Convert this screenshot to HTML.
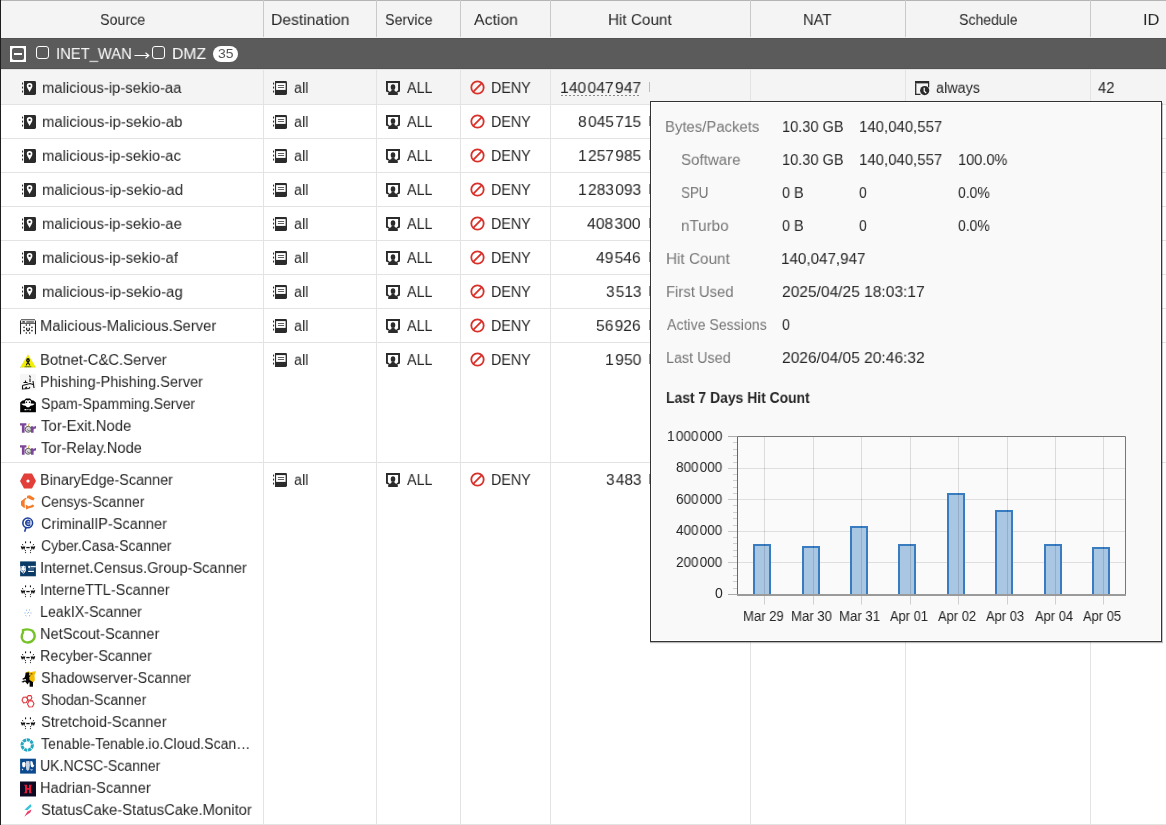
<!DOCTYPE html>
<html><head><meta charset="utf-8"><style>
*{margin:0;padding:0;box-sizing:border-box}
html,body{width:1166px;height:825px;overflow:hidden;background:#fff}
body{position:relative;font-family:"Liberation Sans",sans-serif;color:#262626}
.t{position:absolute;white-space:pre;transform-origin:0 0}
.g{will-change:transform}
.ic{position:absolute;line-height:0}
.ic svg{display:block}
.vl{position:absolute;top:70px;height:755px;width:1px;background:#e3e3e3}
.hl{position:absolute;left:0;width:1166px;height:1px;background:#e3e3e3}
.hvl{position:absolute;top:0;height:37px;width:1px;background:#c9c9c9}
.bar{position:absolute;left:649px;width:1px;height:10px;background:#7896d0}
</style></head><body>
<div style="position:absolute;left:0;top:0;width:1166px;height:38px;background:#f4f4f4"></div>
<div style="position:absolute;left:0;top:0;width:1166px;height:1px;background:#b4b4b4"></div>
<div class="hvl" style="left:263px"></div><div class="hvl" style="left:376px"></div><div class="hvl" style="left:460px"></div><div class="hvl" style="left:550px"></div><div class="hvl" style="left:750px"></div><div class="hvl" style="left:905px"></div><div class="hvl" style="left:1090px"></div>
<div style="position:absolute;left:0;top:38px;width:1166px;height:31px;background:#5b5b5b;border-top:1px solid #525252;border-bottom:1px solid #525252"></div>
<div style="position:absolute;left:0;top:70px;width:1166px;height:34px;background:#f4f4f4"></div>
<div class="vl" style="left:263px"></div><div class="vl" style="left:376px"></div><div class="vl" style="left:460px"></div><div class="vl" style="left:550px"></div><div class="vl" style="left:750px"></div><div class="vl" style="left:905px"></div><div class="vl" style="left:1090px"></div><div class="hl" style="top:69px"></div><div class="hl" style="top:104px"></div><div class="hl" style="top:138px"></div><div class="hl" style="top:172px"></div><div class="hl" style="top:206px"></div><div class="hl" style="top:240px"></div><div class="hl" style="top:274px"></div><div class="hl" style="top:308px"></div><div class="hl" style="top:342px"></div><div class="hl" style="top:462px"></div><div class="hl" style="top:824px"></div>
<div style="position:absolute;left:0;top:0;width:1px;height:825px;background:#1e1e1e"></div>
<div style="position:absolute;left:10px;top:46px;width:16px;height:16px;background:#fff"></div>
<div style="position:absolute;left:12px;top:48px;width:12px;height:12px;background:#5b5b5b;border-radius:2px"></div>
<div style="position:absolute;left:14px;top:53px;width:8px;height:2px;background:#fff"></div>
<div style="position:absolute;left:35.5px;top:46px;width:13.5px;height:13px;border:1.5px solid #fff;border-radius:3px"></div>
<div style="position:absolute;left:151.5px;top:46px;width:13.5px;height:13px;border:1.5px solid #fff;border-radius:3px"></div>
<svg style="position:absolute;left:134px;top:51px" width="16" height="9" viewBox="0 0 16 9"><path d="M0.5 4.5H14.5M11.5 1.8L14.8 4.5L11.5 7.2" fill="none" stroke="#fff" stroke-width="1.1"/></svg>
<div style="position:absolute;left:212.5px;top:46px;width:25.5px;height:16px;background:#fff;border-radius:8px"></div>
<div class="ic" style="left:22px;top:81px"><svg width="14" height="14" viewBox="0 0 14 14"><rect x="0" y="1.6" width="1.1" height="1.9" fill="#2b2b2b"/><rect x="0" y="5.6" width="1.1" height="1.9" fill="#2b2b2b"/><rect x="0" y="9.6" width="1.1" height="1.9" fill="#2b2b2b"/><path d="M2 0H12.6Q14 0 14 1.4V12.6Q14 14 12.6 14H2Z" fill="#2b2b2b"/><path d="M7.6 2.1a2.8 2.8 0 0 1 2.8 2.8c0 1.7-1.7 3.4-2.8 6.1c-1.1-2.7-2.8-4.4-2.8-6.1a2.8 2.8 0 0 1 2.8-2.8z" fill="#fff"/><circle cx="7.6" cy="4.9" r="1.15" fill="#2b2b2b"/></svg></div><div class="ic" style="left:273px;top:81px"><svg width="14" height="14" viewBox="0 0 14 14"><rect x="0" y="1.6" width="1.1" height="1.9" fill="#2b2b2b"/><rect x="0" y="5.6" width="1.1" height="1.9" fill="#2b2b2b"/><rect x="0" y="9.6" width="1.1" height="1.9" fill="#2b2b2b"/><path d="M2 0H12.6Q14 0 14 1.4V12.6Q14 14 12.6 14H2Z" fill="#2b2b2b"/><rect x="3.1" y="2.1" width="9.5" height="6.8" fill="#fff"/><rect x="4.9" y="4.2" width="6.2" height="0.75" fill="#2b2b2b"/><rect x="4.9" y="6.1" width="6.2" height="0.75" fill="#2b2b2b"/></svg></div><div class="ic" style="left:386px;top:81px"><svg width="14" height="14" viewBox="0 0 14 14"><path d="M0.95 10.2V0.95H13.05V10.2" fill="none" stroke="#2b2b2b" stroke-width="1.9"/><path d="M0 9.4Q0 11.4 2.8 11.3L3.6 10.2L1.9 9.4Z" fill="#2b2b2b"/><path d="M14 9.4Q14 11.4 11.2 11.3L10.4 10.2L12.1 9.4Z" fill="#2b2b2b"/><ellipse cx="7" cy="6.1" rx="2.3" ry="2.9" fill="#2b2b2b"/><path d="M5.4 8.4Q7 9.6 8.6 8.4V10L11.8 11.5V13.9H2.2V11.5L5.4 10Z" fill="#2b2b2b"/></svg></div><div class="ic" style="left:469.5px;top:79.5px"><svg width="15" height="15" viewBox="0 0 15 15"><circle cx="7.5" cy="7.5" r="6.2" fill="none" stroke="#d8312a" stroke-width="1.8"/><path d="M11.8 3.2L3.2 11.8" stroke="#d8312a" stroke-width="1.8"/></svg></div><div class="bar" style="top:82px;background:#a3bff2"></div><div class="ic" style="left:22px;top:115px"><svg width="14" height="14" viewBox="0 0 14 14"><rect x="0" y="1.6" width="1.1" height="1.9" fill="#2b2b2b"/><rect x="0" y="5.6" width="1.1" height="1.9" fill="#2b2b2b"/><rect x="0" y="9.6" width="1.1" height="1.9" fill="#2b2b2b"/><path d="M2 0H12.6Q14 0 14 1.4V12.6Q14 14 12.6 14H2Z" fill="#2b2b2b"/><path d="M7.6 2.1a2.8 2.8 0 0 1 2.8 2.8c0 1.7-1.7 3.4-2.8 6.1c-1.1-2.7-2.8-4.4-2.8-6.1a2.8 2.8 0 0 1 2.8-2.8z" fill="#fff"/><circle cx="7.6" cy="4.9" r="1.15" fill="#2b2b2b"/></svg></div><div class="ic" style="left:273px;top:115px"><svg width="14" height="14" viewBox="0 0 14 14"><rect x="0" y="1.6" width="1.1" height="1.9" fill="#2b2b2b"/><rect x="0" y="5.6" width="1.1" height="1.9" fill="#2b2b2b"/><rect x="0" y="9.6" width="1.1" height="1.9" fill="#2b2b2b"/><path d="M2 0H12.6Q14 0 14 1.4V12.6Q14 14 12.6 14H2Z" fill="#2b2b2b"/><rect x="3.1" y="2.1" width="9.5" height="6.8" fill="#fff"/><rect x="4.9" y="4.2" width="6.2" height="0.75" fill="#2b2b2b"/><rect x="4.9" y="6.1" width="6.2" height="0.75" fill="#2b2b2b"/></svg></div><div class="ic" style="left:386px;top:115px"><svg width="14" height="14" viewBox="0 0 14 14"><path d="M0.95 10.2V0.95H13.05V10.2" fill="none" stroke="#2b2b2b" stroke-width="1.9"/><path d="M0 9.4Q0 11.4 2.8 11.3L3.6 10.2L1.9 9.4Z" fill="#2b2b2b"/><path d="M14 9.4Q14 11.4 11.2 11.3L10.4 10.2L12.1 9.4Z" fill="#2b2b2b"/><ellipse cx="7" cy="6.1" rx="2.3" ry="2.9" fill="#2b2b2b"/><path d="M5.4 8.4Q7 9.6 8.6 8.4V10L11.8 11.5V13.9H2.2V11.5L5.4 10Z" fill="#2b2b2b"/></svg></div><div class="ic" style="left:469.5px;top:113.5px"><svg width="15" height="15" viewBox="0 0 15 15"><circle cx="7.5" cy="7.5" r="6.2" fill="none" stroke="#d8312a" stroke-width="1.8"/><path d="M11.8 3.2L3.2 11.8" stroke="#d8312a" stroke-width="1.8"/></svg></div><div class="bar" style="top:116px"></div><div class="ic" style="left:22px;top:149px"><svg width="14" height="14" viewBox="0 0 14 14"><rect x="0" y="1.6" width="1.1" height="1.9" fill="#2b2b2b"/><rect x="0" y="5.6" width="1.1" height="1.9" fill="#2b2b2b"/><rect x="0" y="9.6" width="1.1" height="1.9" fill="#2b2b2b"/><path d="M2 0H12.6Q14 0 14 1.4V12.6Q14 14 12.6 14H2Z" fill="#2b2b2b"/><path d="M7.6 2.1a2.8 2.8 0 0 1 2.8 2.8c0 1.7-1.7 3.4-2.8 6.1c-1.1-2.7-2.8-4.4-2.8-6.1a2.8 2.8 0 0 1 2.8-2.8z" fill="#fff"/><circle cx="7.6" cy="4.9" r="1.15" fill="#2b2b2b"/></svg></div><div class="ic" style="left:273px;top:149px"><svg width="14" height="14" viewBox="0 0 14 14"><rect x="0" y="1.6" width="1.1" height="1.9" fill="#2b2b2b"/><rect x="0" y="5.6" width="1.1" height="1.9" fill="#2b2b2b"/><rect x="0" y="9.6" width="1.1" height="1.9" fill="#2b2b2b"/><path d="M2 0H12.6Q14 0 14 1.4V12.6Q14 14 12.6 14H2Z" fill="#2b2b2b"/><rect x="3.1" y="2.1" width="9.5" height="6.8" fill="#fff"/><rect x="4.9" y="4.2" width="6.2" height="0.75" fill="#2b2b2b"/><rect x="4.9" y="6.1" width="6.2" height="0.75" fill="#2b2b2b"/></svg></div><div class="ic" style="left:386px;top:149px"><svg width="14" height="14" viewBox="0 0 14 14"><path d="M0.95 10.2V0.95H13.05V10.2" fill="none" stroke="#2b2b2b" stroke-width="1.9"/><path d="M0 9.4Q0 11.4 2.8 11.3L3.6 10.2L1.9 9.4Z" fill="#2b2b2b"/><path d="M14 9.4Q14 11.4 11.2 11.3L10.4 10.2L12.1 9.4Z" fill="#2b2b2b"/><ellipse cx="7" cy="6.1" rx="2.3" ry="2.9" fill="#2b2b2b"/><path d="M5.4 8.4Q7 9.6 8.6 8.4V10L11.8 11.5V13.9H2.2V11.5L5.4 10Z" fill="#2b2b2b"/></svg></div><div class="ic" style="left:469.5px;top:147.5px"><svg width="15" height="15" viewBox="0 0 15 15"><circle cx="7.5" cy="7.5" r="6.2" fill="none" stroke="#d8312a" stroke-width="1.8"/><path d="M11.8 3.2L3.2 11.8" stroke="#d8312a" stroke-width="1.8"/></svg></div><div class="bar" style="top:150px"></div><div class="ic" style="left:22px;top:183px"><svg width="14" height="14" viewBox="0 0 14 14"><rect x="0" y="1.6" width="1.1" height="1.9" fill="#2b2b2b"/><rect x="0" y="5.6" width="1.1" height="1.9" fill="#2b2b2b"/><rect x="0" y="9.6" width="1.1" height="1.9" fill="#2b2b2b"/><path d="M2 0H12.6Q14 0 14 1.4V12.6Q14 14 12.6 14H2Z" fill="#2b2b2b"/><path d="M7.6 2.1a2.8 2.8 0 0 1 2.8 2.8c0 1.7-1.7 3.4-2.8 6.1c-1.1-2.7-2.8-4.4-2.8-6.1a2.8 2.8 0 0 1 2.8-2.8z" fill="#fff"/><circle cx="7.6" cy="4.9" r="1.15" fill="#2b2b2b"/></svg></div><div class="ic" style="left:273px;top:183px"><svg width="14" height="14" viewBox="0 0 14 14"><rect x="0" y="1.6" width="1.1" height="1.9" fill="#2b2b2b"/><rect x="0" y="5.6" width="1.1" height="1.9" fill="#2b2b2b"/><rect x="0" y="9.6" width="1.1" height="1.9" fill="#2b2b2b"/><path d="M2 0H12.6Q14 0 14 1.4V12.6Q14 14 12.6 14H2Z" fill="#2b2b2b"/><rect x="3.1" y="2.1" width="9.5" height="6.8" fill="#fff"/><rect x="4.9" y="4.2" width="6.2" height="0.75" fill="#2b2b2b"/><rect x="4.9" y="6.1" width="6.2" height="0.75" fill="#2b2b2b"/></svg></div><div class="ic" style="left:386px;top:183px"><svg width="14" height="14" viewBox="0 0 14 14"><path d="M0.95 10.2V0.95H13.05V10.2" fill="none" stroke="#2b2b2b" stroke-width="1.9"/><path d="M0 9.4Q0 11.4 2.8 11.3L3.6 10.2L1.9 9.4Z" fill="#2b2b2b"/><path d="M14 9.4Q14 11.4 11.2 11.3L10.4 10.2L12.1 9.4Z" fill="#2b2b2b"/><ellipse cx="7" cy="6.1" rx="2.3" ry="2.9" fill="#2b2b2b"/><path d="M5.4 8.4Q7 9.6 8.6 8.4V10L11.8 11.5V13.9H2.2V11.5L5.4 10Z" fill="#2b2b2b"/></svg></div><div class="ic" style="left:469.5px;top:181.5px"><svg width="15" height="15" viewBox="0 0 15 15"><circle cx="7.5" cy="7.5" r="6.2" fill="none" stroke="#d8312a" stroke-width="1.8"/><path d="M11.8 3.2L3.2 11.8" stroke="#d8312a" stroke-width="1.8"/></svg></div><div class="bar" style="top:184px"></div><div class="ic" style="left:22px;top:217px"><svg width="14" height="14" viewBox="0 0 14 14"><rect x="0" y="1.6" width="1.1" height="1.9" fill="#2b2b2b"/><rect x="0" y="5.6" width="1.1" height="1.9" fill="#2b2b2b"/><rect x="0" y="9.6" width="1.1" height="1.9" fill="#2b2b2b"/><path d="M2 0H12.6Q14 0 14 1.4V12.6Q14 14 12.6 14H2Z" fill="#2b2b2b"/><path d="M7.6 2.1a2.8 2.8 0 0 1 2.8 2.8c0 1.7-1.7 3.4-2.8 6.1c-1.1-2.7-2.8-4.4-2.8-6.1a2.8 2.8 0 0 1 2.8-2.8z" fill="#fff"/><circle cx="7.6" cy="4.9" r="1.15" fill="#2b2b2b"/></svg></div><div class="ic" style="left:273px;top:217px"><svg width="14" height="14" viewBox="0 0 14 14"><rect x="0" y="1.6" width="1.1" height="1.9" fill="#2b2b2b"/><rect x="0" y="5.6" width="1.1" height="1.9" fill="#2b2b2b"/><rect x="0" y="9.6" width="1.1" height="1.9" fill="#2b2b2b"/><path d="M2 0H12.6Q14 0 14 1.4V12.6Q14 14 12.6 14H2Z" fill="#2b2b2b"/><rect x="3.1" y="2.1" width="9.5" height="6.8" fill="#fff"/><rect x="4.9" y="4.2" width="6.2" height="0.75" fill="#2b2b2b"/><rect x="4.9" y="6.1" width="6.2" height="0.75" fill="#2b2b2b"/></svg></div><div class="ic" style="left:386px;top:217px"><svg width="14" height="14" viewBox="0 0 14 14"><path d="M0.95 10.2V0.95H13.05V10.2" fill="none" stroke="#2b2b2b" stroke-width="1.9"/><path d="M0 9.4Q0 11.4 2.8 11.3L3.6 10.2L1.9 9.4Z" fill="#2b2b2b"/><path d="M14 9.4Q14 11.4 11.2 11.3L10.4 10.2L12.1 9.4Z" fill="#2b2b2b"/><ellipse cx="7" cy="6.1" rx="2.3" ry="2.9" fill="#2b2b2b"/><path d="M5.4 8.4Q7 9.6 8.6 8.4V10L11.8 11.5V13.9H2.2V11.5L5.4 10Z" fill="#2b2b2b"/></svg></div><div class="ic" style="left:469.5px;top:215.5px"><svg width="15" height="15" viewBox="0 0 15 15"><circle cx="7.5" cy="7.5" r="6.2" fill="none" stroke="#d8312a" stroke-width="1.8"/><path d="M11.8 3.2L3.2 11.8" stroke="#d8312a" stroke-width="1.8"/></svg></div><div class="bar" style="top:218px"></div><div class="ic" style="left:22px;top:251px"><svg width="14" height="14" viewBox="0 0 14 14"><rect x="0" y="1.6" width="1.1" height="1.9" fill="#2b2b2b"/><rect x="0" y="5.6" width="1.1" height="1.9" fill="#2b2b2b"/><rect x="0" y="9.6" width="1.1" height="1.9" fill="#2b2b2b"/><path d="M2 0H12.6Q14 0 14 1.4V12.6Q14 14 12.6 14H2Z" fill="#2b2b2b"/><path d="M7.6 2.1a2.8 2.8 0 0 1 2.8 2.8c0 1.7-1.7 3.4-2.8 6.1c-1.1-2.7-2.8-4.4-2.8-6.1a2.8 2.8 0 0 1 2.8-2.8z" fill="#fff"/><circle cx="7.6" cy="4.9" r="1.15" fill="#2b2b2b"/></svg></div><div class="ic" style="left:273px;top:251px"><svg width="14" height="14" viewBox="0 0 14 14"><rect x="0" y="1.6" width="1.1" height="1.9" fill="#2b2b2b"/><rect x="0" y="5.6" width="1.1" height="1.9" fill="#2b2b2b"/><rect x="0" y="9.6" width="1.1" height="1.9" fill="#2b2b2b"/><path d="M2 0H12.6Q14 0 14 1.4V12.6Q14 14 12.6 14H2Z" fill="#2b2b2b"/><rect x="3.1" y="2.1" width="9.5" height="6.8" fill="#fff"/><rect x="4.9" y="4.2" width="6.2" height="0.75" fill="#2b2b2b"/><rect x="4.9" y="6.1" width="6.2" height="0.75" fill="#2b2b2b"/></svg></div><div class="ic" style="left:386px;top:251px"><svg width="14" height="14" viewBox="0 0 14 14"><path d="M0.95 10.2V0.95H13.05V10.2" fill="none" stroke="#2b2b2b" stroke-width="1.9"/><path d="M0 9.4Q0 11.4 2.8 11.3L3.6 10.2L1.9 9.4Z" fill="#2b2b2b"/><path d="M14 9.4Q14 11.4 11.2 11.3L10.4 10.2L12.1 9.4Z" fill="#2b2b2b"/><ellipse cx="7" cy="6.1" rx="2.3" ry="2.9" fill="#2b2b2b"/><path d="M5.4 8.4Q7 9.6 8.6 8.4V10L11.8 11.5V13.9H2.2V11.5L5.4 10Z" fill="#2b2b2b"/></svg></div><div class="ic" style="left:469.5px;top:249.5px"><svg width="15" height="15" viewBox="0 0 15 15"><circle cx="7.5" cy="7.5" r="6.2" fill="none" stroke="#d8312a" stroke-width="1.8"/><path d="M11.8 3.2L3.2 11.8" stroke="#d8312a" stroke-width="1.8"/></svg></div><div class="bar" style="top:252px"></div><div class="ic" style="left:22px;top:285px"><svg width="14" height="14" viewBox="0 0 14 14"><rect x="0" y="1.6" width="1.1" height="1.9" fill="#2b2b2b"/><rect x="0" y="5.6" width="1.1" height="1.9" fill="#2b2b2b"/><rect x="0" y="9.6" width="1.1" height="1.9" fill="#2b2b2b"/><path d="M2 0H12.6Q14 0 14 1.4V12.6Q14 14 12.6 14H2Z" fill="#2b2b2b"/><path d="M7.6 2.1a2.8 2.8 0 0 1 2.8 2.8c0 1.7-1.7 3.4-2.8 6.1c-1.1-2.7-2.8-4.4-2.8-6.1a2.8 2.8 0 0 1 2.8-2.8z" fill="#fff"/><circle cx="7.6" cy="4.9" r="1.15" fill="#2b2b2b"/></svg></div><div class="ic" style="left:273px;top:285px"><svg width="14" height="14" viewBox="0 0 14 14"><rect x="0" y="1.6" width="1.1" height="1.9" fill="#2b2b2b"/><rect x="0" y="5.6" width="1.1" height="1.9" fill="#2b2b2b"/><rect x="0" y="9.6" width="1.1" height="1.9" fill="#2b2b2b"/><path d="M2 0H12.6Q14 0 14 1.4V12.6Q14 14 12.6 14H2Z" fill="#2b2b2b"/><rect x="3.1" y="2.1" width="9.5" height="6.8" fill="#fff"/><rect x="4.9" y="4.2" width="6.2" height="0.75" fill="#2b2b2b"/><rect x="4.9" y="6.1" width="6.2" height="0.75" fill="#2b2b2b"/></svg></div><div class="ic" style="left:386px;top:285px"><svg width="14" height="14" viewBox="0 0 14 14"><path d="M0.95 10.2V0.95H13.05V10.2" fill="none" stroke="#2b2b2b" stroke-width="1.9"/><path d="M0 9.4Q0 11.4 2.8 11.3L3.6 10.2L1.9 9.4Z" fill="#2b2b2b"/><path d="M14 9.4Q14 11.4 11.2 11.3L10.4 10.2L12.1 9.4Z" fill="#2b2b2b"/><ellipse cx="7" cy="6.1" rx="2.3" ry="2.9" fill="#2b2b2b"/><path d="M5.4 8.4Q7 9.6 8.6 8.4V10L11.8 11.5V13.9H2.2V11.5L5.4 10Z" fill="#2b2b2b"/></svg></div><div class="ic" style="left:469.5px;top:283.5px"><svg width="15" height="15" viewBox="0 0 15 15"><circle cx="7.5" cy="7.5" r="6.2" fill="none" stroke="#d8312a" stroke-width="1.8"/><path d="M11.8 3.2L3.2 11.8" stroke="#d8312a" stroke-width="1.8"/></svg></div><div class="bar" style="top:286px"></div><div class="ic" style="left:273px;top:319px"><svg width="14" height="14" viewBox="0 0 14 14"><rect x="0" y="1.6" width="1.1" height="1.9" fill="#2b2b2b"/><rect x="0" y="5.6" width="1.1" height="1.9" fill="#2b2b2b"/><rect x="0" y="9.6" width="1.1" height="1.9" fill="#2b2b2b"/><path d="M2 0H12.6Q14 0 14 1.4V12.6Q14 14 12.6 14H2Z" fill="#2b2b2b"/><rect x="3.1" y="2.1" width="9.5" height="6.8" fill="#fff"/><rect x="4.9" y="4.2" width="6.2" height="0.75" fill="#2b2b2b"/><rect x="4.9" y="6.1" width="6.2" height="0.75" fill="#2b2b2b"/></svg></div><div class="ic" style="left:386px;top:319px"><svg width="14" height="14" viewBox="0 0 14 14"><path d="M0.95 10.2V0.95H13.05V10.2" fill="none" stroke="#2b2b2b" stroke-width="1.9"/><path d="M0 9.4Q0 11.4 2.8 11.3L3.6 10.2L1.9 9.4Z" fill="#2b2b2b"/><path d="M14 9.4Q14 11.4 11.2 11.3L10.4 10.2L12.1 9.4Z" fill="#2b2b2b"/><ellipse cx="7" cy="6.1" rx="2.3" ry="2.9" fill="#2b2b2b"/><path d="M5.4 8.4Q7 9.6 8.6 8.4V10L11.8 11.5V13.9H2.2V11.5L5.4 10Z" fill="#2b2b2b"/></svg></div><div class="ic" style="left:469.5px;top:317.5px"><svg width="15" height="15" viewBox="0 0 15 15"><circle cx="7.5" cy="7.5" r="6.2" fill="none" stroke="#d8312a" stroke-width="1.8"/><path d="M11.8 3.2L3.2 11.8" stroke="#d8312a" stroke-width="1.8"/></svg></div><div class="bar" style="top:320px"></div><div class="ic" style="left:273px;top:353px"><svg width="14" height="14" viewBox="0 0 14 14"><rect x="0" y="1.6" width="1.1" height="1.9" fill="#2b2b2b"/><rect x="0" y="5.6" width="1.1" height="1.9" fill="#2b2b2b"/><rect x="0" y="9.6" width="1.1" height="1.9" fill="#2b2b2b"/><path d="M2 0H12.6Q14 0 14 1.4V12.6Q14 14 12.6 14H2Z" fill="#2b2b2b"/><rect x="3.1" y="2.1" width="9.5" height="6.8" fill="#fff"/><rect x="4.9" y="4.2" width="6.2" height="0.75" fill="#2b2b2b"/><rect x="4.9" y="6.1" width="6.2" height="0.75" fill="#2b2b2b"/></svg></div><div class="ic" style="left:386px;top:353px"><svg width="14" height="14" viewBox="0 0 14 14"><path d="M0.95 10.2V0.95H13.05V10.2" fill="none" stroke="#2b2b2b" stroke-width="1.9"/><path d="M0 9.4Q0 11.4 2.8 11.3L3.6 10.2L1.9 9.4Z" fill="#2b2b2b"/><path d="M14 9.4Q14 11.4 11.2 11.3L10.4 10.2L12.1 9.4Z" fill="#2b2b2b"/><ellipse cx="7" cy="6.1" rx="2.3" ry="2.9" fill="#2b2b2b"/><path d="M5.4 8.4Q7 9.6 8.6 8.4V10L11.8 11.5V13.9H2.2V11.5L5.4 10Z" fill="#2b2b2b"/></svg></div><div class="ic" style="left:469.5px;top:351.5px"><svg width="15" height="15" viewBox="0 0 15 15"><circle cx="7.5" cy="7.5" r="6.2" fill="none" stroke="#d8312a" stroke-width="1.8"/><path d="M11.8 3.2L3.2 11.8" stroke="#d8312a" stroke-width="1.8"/></svg></div><div class="bar" style="top:354px"></div><div class="ic" style="left:273px;top:473px"><svg width="14" height="14" viewBox="0 0 14 14"><rect x="0" y="1.6" width="1.1" height="1.9" fill="#2b2b2b"/><rect x="0" y="5.6" width="1.1" height="1.9" fill="#2b2b2b"/><rect x="0" y="9.6" width="1.1" height="1.9" fill="#2b2b2b"/><path d="M2 0H12.6Q14 0 14 1.4V12.6Q14 14 12.6 14H2Z" fill="#2b2b2b"/><rect x="3.1" y="2.1" width="9.5" height="6.8" fill="#fff"/><rect x="4.9" y="4.2" width="6.2" height="0.75" fill="#2b2b2b"/><rect x="4.9" y="6.1" width="6.2" height="0.75" fill="#2b2b2b"/></svg></div><div class="ic" style="left:386px;top:473px"><svg width="14" height="14" viewBox="0 0 14 14"><path d="M0.95 10.2V0.95H13.05V10.2" fill="none" stroke="#2b2b2b" stroke-width="1.9"/><path d="M0 9.4Q0 11.4 2.8 11.3L3.6 10.2L1.9 9.4Z" fill="#2b2b2b"/><path d="M14 9.4Q14 11.4 11.2 11.3L10.4 10.2L12.1 9.4Z" fill="#2b2b2b"/><ellipse cx="7" cy="6.1" rx="2.3" ry="2.9" fill="#2b2b2b"/><path d="M5.4 8.4Q7 9.6 8.6 8.4V10L11.8 11.5V13.9H2.2V11.5L5.4 10Z" fill="#2b2b2b"/></svg></div><div class="ic" style="left:469.5px;top:471.5px"><svg width="15" height="15" viewBox="0 0 15 15"><circle cx="7.5" cy="7.5" r="6.2" fill="none" stroke="#d8312a" stroke-width="1.8"/><path d="M11.8 3.2L3.2 11.8" stroke="#d8312a" stroke-width="1.8"/></svg></div><div class="bar" style="top:474px"></div><div class="ic" style="left:914.5px;top:80.5px"><svg width="15" height="15" viewBox="0 0 15 15"><path d="M0.7 2.2V13.3H5.5" fill="none" stroke="#2b2b2b" stroke-width="1.3"/><rect x="0" y="0" width="14.2" height="2.4" fill="#2b2b2b"/><path d="M13.6 2V6.2" stroke="#2b2b2b" stroke-width="1.2"/><circle cx="9.7" cy="9.6" r="4.6" fill="#2b2b2b"/><path d="M9.2 6.8V10.2L11.2 12" fill="none" stroke="#fff" stroke-width="1.2"/></svg></div><div class="ic" style="left:20px;top:318.5px"><svg width="16" height="16" viewBox="0 0 16 16"><path d="M0.5 1.6V15.3M15.5 1.6V15.3" stroke="#222" stroke-width="1.1"/><path d="M1 0.75H15" stroke="#222" stroke-width="0.9"/><path d="M0.5 4.3H15.5" stroke="#222" stroke-width="0.9"/><rect x="2.2" y="2.3" width="2.8" height="1.3" rx="0.6" fill="#111"/><rect x="6.3" y="2.4" width="7.6" height="1.1" fill="#333"/><circle cx="9.65" cy="6.03" r="0.8" fill="#111"/><circle cx="11.97" cy="8.35" r="0.8" fill="#111"/><circle cx="11.97" cy="11.65" r="0.8" fill="#111"/><circle cx="9.65" cy="13.97" r="0.8" fill="#111"/><circle cx="6.35" cy="13.97" r="0.8" fill="#111"/><circle cx="4.03" cy="11.65" r="0.8" fill="#111"/><circle cx="4.03" cy="8.35" r="0.8" fill="#111"/><circle cx="6.35" cy="6.03" r="0.8" fill="#111"/><path d="M6.7 8.7V10.8Q8 12.9 9.3 10.8V8.7" fill="none" stroke="#111" stroke-width="1.2"/></svg></div><div class="ic" style="left:20px;top:353px"><svg width="16" height="16" viewBox="0 0 16 16"><path d="M8 1.6L15.9 14.5H0.1Z" fill="#f2f000"/><path d="M8 1.6L15.9 14.5H0.1Z" fill="none" stroke="#9aa0b0" stroke-width="0.35" stroke-dasharray="0.6 1.4"/><ellipse cx="8" cy="7.3" rx="1.8" ry="2.2" fill="#111"/><circle cx="8" cy="7.2" r="0.55" fill="#dd0"/><path d="M7.2 9.2L8.8 9.2L10.3 12.3L9.4 12.6L8 10.6L6.6 12.6L5.7 12.3Z" fill="#111"/><path d="M4.6 13.7H11.4" stroke="#2a4a20" stroke-width="0.7"/></svg></div><div class="ic" style="left:20px;top:374px"><svg width="16" height="16" viewBox="0 0 16 16"><rect x="0" y="0" width="16" height="16" fill="#f6f6f6"/><path d="M9.5 1.5L10.5 3.5M10 4.5V8M3.5 8.5H7.5M5.5 6.5V9M2.5 11.5L10 9.5L13 10.5M2.5 11.5V15L9 14.5L10 13M7 13L5 14.5M13 7L14 14" fill="none" stroke="#111" stroke-width="1.1"/></svg></div><div class="ic" style="left:20px;top:396.5px"><svg width="16" height="16" viewBox="0 0 16 16"><path d="M0.2 5.5L2.5 3.6L4.2 3.2L6 1.4H10L11.8 3.2L13.5 3.6L15.9 5.5V15.3H0.2Z" fill="#000"/><path d="M5 4.5Q5.2 3 6.5 3Q7.5 3.6 8 3.4Q8.5 3.6 9.5 3Q10.8 3 11 4.5L10.7 6.6L14.7 6.8L13 8.3L10.5 8.7L9 10.3H7L5.5 8.7L3 8.3L1.2 6.8L5.3 6.6Z" fill="#fff"/><circle cx="6.5" cy="5.2" r="0.75" fill="#000"/><circle cx="9.5" cy="5.2" r="0.75" fill="#000"/><rect x="4.5" y="12" width="2" height="1.3" fill="#ddd"/><rect x="7.3" y="12.1" width="1.2" height="1" fill="#ccc"/><rect x="9.5" y="12" width="1.3" height="1.4" fill="#ddd"/></svg></div><div class="ic" style="left:20px;top:422.8px"><svg width="16" height="10" viewBox="0 0 16 10"><path d="M0 0.3H6.4V2.6H4.6V9.7H1.9V2.6H0Z" fill="#7d4698"/><path d="M11 3.2H13.4V4.6Q14 3 16 3V5.4Q14 5.4 13.6 6.5V9.7H11Z" fill="#7d4698"/><circle cx="8.2" cy="6.3" r="3" fill="#d8d8d8" stroke="#444" stroke-width="0.8"/><path d="M8.2 3.3L9.3 0.2" stroke="#c8a010" stroke-width="0.8"/><path d="M7.2 6.5Q8 8 9.6 7.4" fill="none" stroke="#333" stroke-width="0.7"/></svg></div><div class="ic" style="left:20px;top:444.8px"><svg width="16" height="10" viewBox="0 0 16 10"><path d="M0 0.3H6.4V2.6H4.6V9.7H1.9V2.6H0Z" fill="#7d4698"/><path d="M11 3.2H13.4V4.6Q14 3 16 3V5.4Q14 5.4 13.6 6.5V9.7H11Z" fill="#7d4698"/><circle cx="8.2" cy="6.3" r="3" fill="#d8d8d8" stroke="#444" stroke-width="0.8"/><path d="M8.2 3.3L9.3 0.2" stroke="#c8a010" stroke-width="0.8"/><path d="M7.2 6.5Q8 8 9.6 7.4" fill="none" stroke="#333" stroke-width="0.7"/></svg></div><div class="ic" style="left:20px;top:472.8px"><svg width="16" height="16" viewBox="0 0 16 16"><path d="M4 0.6H12L16 8L12 15.4H4L0 8Z" fill="#e23f3a"/><circle cx="8" cy="8" r="1.6" fill="#fff"/></svg></div><div class="ic" style="left:20px;top:494.5px"><svg width="16" height="16" viewBox="0 0 16 16"><path d="M7.2 0.8L9.8 0.3L14.6 3.2L13.5 5.4L10.5 4.5L8.4 3.2L6.7 3.4Z" fill="#f47b2a"/><path d="M5.5 2.7L6.6 3.6L4.8 5.2L4.6 8.6L5 12.8L3.8 12.8L1 10.2L1 6.3Z" fill="#f47b2a"/><path d="M5.8 9.4L8.3 11.2L11 10.5L12.5 9.6L14.3 10.8L13 12.2L9 13.3L6.2 14.5L5.8 13Z" fill="#f47b2a"/></svg></div><div class="ic" style="left:20px;top:516.5px"><svg width="16" height="16" viewBox="0 0 16 16"><circle cx="7.7" cy="5.9" r="4.85" fill="none" stroke="#1d3f9e" stroke-width="1.6"/><path d="M10.3 4.4A2.5 2.5 0 1 0 10.3 7.4" fill="none" stroke="#1d3f9e" stroke-width="1.6"/><rect x="6.2" y="5.2" width="4.3" height="1.4" fill="#1d3f9e"/><path d="M6 10.8L4.6 14.8" stroke="#1d3f9e" stroke-width="1.6"/></svg></div><div class="ic" style="left:20px;top:539.8px"><svg width="16" height="16" viewBox="0 0 16 16"><rect x="5" y="1.2" width="1.1" height="2" rx="0.5" fill="#111"/><rect x="9.9" y="1.2" width="1.1" height="2" rx="0.5" fill="#111"/><circle cx="2.6" cy="4.6" r="0.6" fill="#222"/><circle cx="13.5" cy="4.6" r="0.6" fill="#222"/><path d="M1.2 6.3L2.2 8.9L3.1 6.8L4.1 8.9L4.9 6.3M11.1 6.3L11.9 8.9L12.9 6.8L13.8 8.9L14.8 6.3" fill="none" stroke="#111" stroke-width="1.05"/><rect x="6.3" y="6.9" width="3.4" height="1.2" fill="#111"/><rect x="6.3" y="8.4" width="3.4" height="0.7" fill="#bbb"/><circle cx="5.5" cy="10.6" r="0.6" fill="#222"/><circle cx="10.5" cy="10.6" r="0.6" fill="#222"/><circle cx="5.5" cy="12.6" r="0.6" fill="#222"/><circle cx="10.5" cy="12.6" r="0.6" fill="#222"/><circle cx="2.8" cy="9.5" r="0.5" fill="#ccc"/><circle cx="13.2" cy="9.5" r="0.5" fill="#ccc"/></svg></div><div class="ic" style="left:20px;top:560.5px"><svg width="16" height="16" viewBox="0 0 16 16"><rect x="0.1" y="0.4" width="15.8" height="14.9" fill="#0a3a66"/><path d="M0.2 5.6L2.5 5.2L3.5 4.4L4.6 5.2L5.9 5.4L6 9.5L4.8 11.6L3.4 12.8L2 11.6L0.9 10.3L0.2 9.4Z" fill="#fff"/><rect x="0.6" y="6.4" width="1.4" height="0.9" fill="#3a5a8a"/><rect x="4.2" y="6.4" width="1.4" height="0.9" fill="#3a5a8a"/><path d="M1 8.7L3.4 10.2L5.6 8.7" fill="none" stroke="#5a7aa0" stroke-width="0.8"/><rect x="2.6" y="10.7" width="1.6" height="0.9" fill="#1a3a66"/><rect x="8.2" y="4.9" width="2" height="1.9" fill="#fff"/><rect x="10.6" y="4.9" width="5.2" height="1.4" fill="#e8eef5"/><rect x="8.6" y="7.6" width="5.4" height="0.7" fill="#8aa0bc"/><rect x="8.2" y="9.8" width="5.8" height="1.2" fill="#fff"/></svg></div><div class="ic" style="left:20px;top:583.8px"><svg width="16" height="16" viewBox="0 0 16 16"><rect x="5" y="1.2" width="1.1" height="2" rx="0.5" fill="#111"/><rect x="9.9" y="1.2" width="1.1" height="2" rx="0.5" fill="#111"/><circle cx="2.6" cy="4.6" r="0.6" fill="#222"/><circle cx="13.5" cy="4.6" r="0.6" fill="#222"/><path d="M1.2 6.3L2.2 8.9L3.1 6.8L4.1 8.9L4.9 6.3M11.1 6.3L11.9 8.9L12.9 6.8L13.8 8.9L14.8 6.3" fill="none" stroke="#111" stroke-width="1.05"/><rect x="6.3" y="6.9" width="3.4" height="1.2" fill="#111"/><rect x="6.3" y="8.4" width="3.4" height="0.7" fill="#bbb"/><circle cx="5.5" cy="10.6" r="0.6" fill="#222"/><circle cx="10.5" cy="10.6" r="0.6" fill="#222"/><circle cx="5.5" cy="12.6" r="0.6" fill="#222"/><circle cx="10.5" cy="12.6" r="0.6" fill="#222"/><circle cx="2.8" cy="9.5" r="0.5" fill="#ccc"/><circle cx="13.2" cy="9.5" r="0.5" fill="#ccc"/></svg></div><div class="ic" style="left:20px;top:605px"><svg width="16" height="16" viewBox="0 0 16 16"><path d="M6 5.5L7 4.8M9 4.7L10 5.3M11 7.5V8.5M10 10.5L9 11M6.5 11L5.5 10.5M5 8.5V7.5M7.5 8.5L8.8 7" fill="none" stroke="#4b8fe0" stroke-width="0.9" opacity="0.8"/></svg></div><div class="ic" style="left:20px;top:627.5px"><svg width="16" height="16" viewBox="0 0 16 16"><path d="M3 2.2Q8 0.3 12.5 2.8Q15.2 5.5 14.5 9.5Q13 14 8 14.5Q3.2 14.5 2 10.5Q1.2 7 3 4.6Z" fill="none" stroke="#76c228" stroke-width="2.4"/></svg></div><div class="ic" style="left:20px;top:649.8px"><svg width="16" height="16" viewBox="0 0 16 16"><rect x="5" y="1.2" width="1.1" height="2" rx="0.5" fill="#111"/><rect x="9.9" y="1.2" width="1.1" height="2" rx="0.5" fill="#111"/><circle cx="2.6" cy="4.6" r="0.6" fill="#222"/><circle cx="13.5" cy="4.6" r="0.6" fill="#222"/><path d="M1.2 6.3L2.2 8.9L3.1 6.8L4.1 8.9L4.9 6.3M11.1 6.3L11.9 8.9L12.9 6.8L13.8 8.9L14.8 6.3" fill="none" stroke="#111" stroke-width="1.05"/><rect x="6.3" y="6.9" width="3.4" height="1.2" fill="#111"/><rect x="6.3" y="8.4" width="3.4" height="0.7" fill="#bbb"/><circle cx="5.5" cy="10.6" r="0.6" fill="#222"/><circle cx="10.5" cy="10.6" r="0.6" fill="#222"/><circle cx="5.5" cy="12.6" r="0.6" fill="#222"/><circle cx="10.5" cy="12.6" r="0.6" fill="#222"/><circle cx="2.8" cy="9.5" r="0.5" fill="#ccc"/><circle cx="13.2" cy="9.5" r="0.5" fill="#ccc"/></svg></div><div class="ic" style="left:20px;top:670.5px"><svg width="16" height="16" viewBox="0 0 16 16"><path d="M5.5 1.5L8.5 0.3L10.5 1.2L13.5 0.5L16 0.2L15.5 2L14.5 4L14.8 9L13.5 11.5L10 11.5L9 8Z" fill="#f5bd00"/><path d="M5.6 1.7L8.6 1.2L9.4 2.2L8.8 4.2L10.9 4.8L9.2 6.1L9.6 9L12 10.4L11.5 12L9 11.2L7.6 13.4L6.6 12.2L5 10.6L3.5 11.5L1.2 11L4 9.5L6.3 9.6L5.6 7.9L2.9 8.8L2.4 7.8L4.6 6.4L5.3 4Z" fill="#050505"/><path d="M9.6 10.8H13V15.7H9.6Z" fill="#050505"/><rect x="10.6" y="2.5" width="1.8" height="0.8" fill="#050505"/></svg></div><div class="ic" style="left:20px;top:693.5px"><svg width="16" height="16" viewBox="0 0 16 16"><path d="M3.3 3.3L6.3 3.1L7.8 5.7L6.5 8.5L3.5 8.8L2 6.2Z" fill="none" stroke="#e0393e" stroke-width="1.1"/><path d="M8.3 1.5L10.9 1.6L11.9 3.9L10.6 6.1L8 6L7 3.8Z" fill="none" stroke="#e0393e" stroke-width="1.1"/><path d="M9 6.9L12.4 6.7L14 9.7L12.5 12.8L9.1 13L7.5 10Z" fill="none" stroke="#e0393e" stroke-width="1.1"/></svg></div><div class="ic" style="left:20px;top:715.8px"><svg width="16" height="16" viewBox="0 0 16 16"><rect x="5" y="1.2" width="1.1" height="2" rx="0.5" fill="#111"/><rect x="9.9" y="1.2" width="1.1" height="2" rx="0.5" fill="#111"/><circle cx="2.6" cy="4.6" r="0.6" fill="#222"/><circle cx="13.5" cy="4.6" r="0.6" fill="#222"/><path d="M1.2 6.3L2.2 8.9L3.1 6.8L4.1 8.9L4.9 6.3M11.1 6.3L11.9 8.9L12.9 6.8L13.8 8.9L14.8 6.3" fill="none" stroke="#111" stroke-width="1.05"/><rect x="6.3" y="6.9" width="3.4" height="1.2" fill="#111"/><rect x="6.3" y="8.4" width="3.4" height="0.7" fill="#bbb"/><circle cx="5.5" cy="10.6" r="0.6" fill="#222"/><circle cx="10.5" cy="10.6" r="0.6" fill="#222"/><circle cx="5.5" cy="12.6" r="0.6" fill="#222"/><circle cx="10.5" cy="12.6" r="0.6" fill="#222"/><circle cx="2.8" cy="9.5" r="0.5" fill="#ccc"/><circle cx="13.2" cy="9.5" r="0.5" fill="#ccc"/></svg></div><div class="ic" style="left:20px;top:736.8px"><svg width="16" height="16" viewBox="0 0 16 16"><circle cx="7.2" cy="8" r="5.2" fill="none" stroke="#22a8c0" stroke-width="3" stroke-dasharray="3.2 0.7"/></svg></div><div class="ic" style="left:20px;top:758.2px"><svg width="16" height="16" viewBox="0 0 16 16"><rect x="0.1" y="0.7" width="15.8" height="14.9" fill="#0b4a8e"/><path d="M2.3 4.5L4.5 3.8L5.6 5.5L5.3 8.2L4.2 9.5L2.6 9L2.1 6.5Z" fill="#fff"/><path d="M2 10.5L3.4 11.8L2.6 12.6L1.9 11.6Z" fill="#f4f4f4"/><path d="M6 3.3L9.4 3.1L9.9 7L9.2 11.5L7.8 13L6.3 11.8L5.8 7.5Z" fill="#c9d3e6"/><path d="M10.5 3L12.4 3.6L13.2 6.5L14.3 7.8L12.8 9.4L11 8.7L10.4 6Z" fill="#fff"/><path d="M9.5 11.5L13.2 11.3L11.8 12.8Z" fill="#b9c6dc"/></svg></div><div class="ic" style="left:20px;top:780.5px"><svg width="16" height="16" viewBox="0 0 16 16"><rect x="0" y="0.5" width="16" height="15" fill="#0d0b24"/><path d="M4.3 3.8H7V7H9V3.8H11.7V4.8H11V11.2H11.7V12.2H9V8.8H7V12.2H4.3V11.2H5V4.8H4.3Z" fill="#e8173a"/></svg></div><div class="ic" style="left:20px;top:802.5px"><svg width="16" height="16" viewBox="0 0 16 16"><path d="M10.5 1L4.5 6.8L7.5 7.2L11.5 3.5Z" fill="#38c4dc"/><path d="M11.5 6.5L7.5 8.6L4.2 13.8L10.5 9.2Z" fill="#ea3b6a"/></svg></div><div style="position:absolute;left:560.5px;top:95px;width:80px;height:1px;background:repeating-linear-gradient(90deg,#8a8a8a 0 2.5px,transparent 2.5px 4px)"></div>
<span class="t g" style="left:99.90px;top:13.08px;font-size:16px;line-height:16px;transform:scale(0.8918,0.9167)">Source</span>
<span class="t g" style="left:271.32px;top:13.08px;font-size:16px;line-height:16px;transform:scale(0.9789,0.9167)">Destination</span>
<span class="t g" style="left:385.30px;top:13.08px;font-size:16px;line-height:16px;transform:scale(0.8905,0.9167)">Service</span>
<span class="t g" style="left:474.30px;top:13.08px;font-size:16px;line-height:16px;transform:scale(0.9869,0.9167)">Action</span>
<span class="t g" style="left:608.44px;top:13.08px;font-size:16px;line-height:16px;transform:scale(0.9555,0.9167)">Hit Count</span>
<span class="t g" style="left:803.47px;top:13.08px;font-size:16px;line-height:16px;transform:scale(0.9255,0.9167)">NAT</span>
<span class="t g" style="left:959.10px;top:13.08px;font-size:16px;line-height:16px;transform:scale(0.8785,0.9167)">Schedule</span>
<span class="t g" style="left:1143.37px;top:13.08px;font-size:16px;line-height:16px;transform:scale(1.0315,0.9167)">ID</span>
<span class="t g" style="left:55.88px;top:46.88px;font-size:16px;line-height:16px;transform:scale(0.9240,0.9167);color:#fff">INET_WAN</span>
<span class="t g" style="left:171.52px;top:46.88px;font-size:16px;line-height:16px;transform:scale(0.9798,0.9167);color:#fff">DMZ</span>
<span class="t g" style="left:218.00px;top:47.20px;font-size:13.5px;line-height:13.5px;transform:scale(1.0339,1.0);color:#555">35</span>
<span class="t g" style="left:41.87px;top:81.08px;font-size:16px;line-height:16px;transform:scale(0.9272,0.9167)">malicious-ip-sekio-aa</span>
<span class="t g" style="left:41.87px;top:115.08px;font-size:16px;line-height:16px;transform:scale(0.9339,0.9167)">malicious-ip-sekio-ab</span>
<span class="t g" style="left:41.87px;top:149.08px;font-size:16px;line-height:16px;transform:scale(0.9294,0.9167)">malicious-ip-sekio-ac</span>
<span class="t g" style="left:41.86px;top:183.08px;font-size:16px;line-height:16px;transform:scale(0.9382,0.9167)">malicious-ip-sekio-ad</span>
<span class="t g" style="left:41.87px;top:217.08px;font-size:16px;line-height:16px;transform:scale(0.9299,0.9167)">malicious-ip-sekio-ae</span>
<span class="t g" style="left:41.87px;top:251.08px;font-size:16px;line-height:16px;transform:scale(0.9321,0.9167)">malicious-ip-sekio-af</span>
<span class="t g" style="left:41.86px;top:285.08px;font-size:16px;line-height:16px;transform:scale(0.9361,0.9167)">malicious-ip-sekio-ag</span>
<span class="t g" style="left:40.37px;top:319.08px;font-size:16px;line-height:16px;transform:scale(0.9266,0.9167)">Malicious-Malicious.Server</span>
<span class="t g" style="left:40.27px;top:353.08px;font-size:16px;line-height:16px;transform:scale(0.9260,0.9167)">Botnet-C&amp;C.Server</span>
<span class="t g" style="left:40.29px;top:375.08px;font-size:16px;line-height:16px;transform:scale(0.9068,0.9167)">Phishing-Phishing.Server</span>
<span class="t g" style="left:41.20px;top:397.08px;font-size:16px;line-height:16px;transform:scale(0.8798,0.9167)">Spam-Spamming.Server</span>
<span class="t g" style="left:41.20px;top:419.08px;font-size:16px;line-height:16px;transform:scale(0.9317,0.9167)">Tor-Exit.Node</span>
<span class="t g" style="left:41.20px;top:441.08px;font-size:16px;line-height:16px;transform:scale(0.9176,0.9167)">Tor-Relay.Node</span>
<span class="t g" style="left:40.30px;top:473.08px;font-size:16px;line-height:16px;transform:scale(0.9001,0.9167)">BinaryEdge-Scanner</span>
<span class="t g" style="left:41.20px;top:495.08px;font-size:16px;line-height:16px;transform:scale(0.8744,0.9167)">Censys-Scanner</span>
<span class="t g" style="left:41.20px;top:517.08px;font-size:16px;line-height:16px;transform:scale(0.9076,0.9167)">CriminalIP-Scanner</span>
<span class="t g" style="left:41.20px;top:539.08px;font-size:16px;line-height:16px;transform:scale(0.8781,0.9167)">Cyber.Casa-Scanner</span>
<span class="t g" style="left:40.29px;top:561.08px;font-size:16px;line-height:16px;transform:scale(0.9119,0.9167)">Internet.Census.Group-Scanner</span>
<span class="t g" style="left:40.29px;top:583.08px;font-size:16px;line-height:16px;transform:scale(0.9058,0.9167)">InterneTTL-Scanner</span>
<span class="t g" style="left:40.31px;top:605.08px;font-size:16px;line-height:16px;transform:scale(0.8872,0.9167)">LeakIX-Scanner</span>
<span class="t g" style="left:40.29px;top:627.08px;font-size:16px;line-height:16px;transform:scale(0.9125,0.9167)">NetScout-Scanner</span>
<span class="t g" style="left:40.30px;top:649.08px;font-size:16px;line-height:16px;transform:scale(0.8979,0.9167)">Recyber-Scanner</span>
<span class="t g" style="left:41.20px;top:671.08px;font-size:16px;line-height:16px;transform:scale(0.8983,0.9167)">Shadowserver-Scanner</span>
<span class="t g" style="left:41.20px;top:693.08px;font-size:16px;line-height:16px;transform:scale(0.8770,0.9167)">Shodan-Scanner</span>
<span class="t g" style="left:41.20px;top:715.08px;font-size:16px;line-height:16px;transform:scale(0.9162,0.9167)">Stretchoid-Scanner</span>
<span class="t g" style="left:41.20px;top:737.08px;font-size:16px;line-height:16px;transform:scale(0.8816,0.9167)">Tenable-Tenable.io.Cloud.Scan…</span>
<span class="t g" style="left:40.32px;top:759.08px;font-size:16px;line-height:16px;transform:scale(0.8785,0.9167)">UK.NCSC-Scanner</span>
<span class="t g" style="left:40.28px;top:781.08px;font-size:16px;line-height:16px;transform:scale(0.9152,0.9167)">Hadrian-Scanner</span>
<span class="t g" style="left:41.20px;top:803.08px;font-size:16px;line-height:16px;transform:scale(0.9223,0.9167)">StatusCake-StatusCake.Monitor</span>
<span class="t g" style="left:294.00px;top:81.08px;font-size:16px;line-height:16px;transform:scale(0.8995,0.9167)">all</span>
<span class="t g" style="left:406.50px;top:81.08px;font-size:16px;line-height:16px;transform:scale(0.8925,0.9167)">ALL</span>
<span class="t g" style="left:490.81px;top:81.08px;font-size:16px;line-height:16px;transform:scale(0.8931,0.9167)">DENY</span>
<span class="t g" style="left:559.72px;top:81.08px;font-size:16px;line-height:16px;transform:scale(0.9810,0.9167)">140 047 947</span>
<span class="t g" style="left:294.00px;top:115.08px;font-size:16px;line-height:16px;transform:scale(0.8995,0.9167)">all</span>
<span class="t g" style="left:406.50px;top:115.08px;font-size:16px;line-height:16px;transform:scale(0.8925,0.9167)">ALL</span>
<span class="t g" style="left:490.81px;top:115.08px;font-size:16px;line-height:16px;transform:scale(0.8931,0.9167)">DENY</span>
<span class="t g" style="left:577.70px;top:115.08px;font-size:16px;line-height:16px;transform:scale(0.9729,0.9167)">8 045 715</span>
<span class="t g" style="left:294.00px;top:149.08px;font-size:16px;line-height:16px;transform:scale(0.8995,0.9167)">all</span>
<span class="t g" style="left:406.50px;top:149.08px;font-size:16px;line-height:16px;transform:scale(0.8925,0.9167)">ALL</span>
<span class="t g" style="left:490.81px;top:149.08px;font-size:16px;line-height:16px;transform:scale(0.8931,0.9167)">DENY</span>
<span class="t g" style="left:577.73px;top:149.08px;font-size:16px;line-height:16px;transform:scale(0.9725,0.9167)">1 257 985</span>
<span class="t g" style="left:294.00px;top:183.08px;font-size:16px;line-height:16px;transform:scale(0.8995,0.9167)">all</span>
<span class="t g" style="left:406.50px;top:183.08px;font-size:16px;line-height:16px;transform:scale(0.8925,0.9167)">ALL</span>
<span class="t g" style="left:490.81px;top:183.08px;font-size:16px;line-height:16px;transform:scale(0.8931,0.9167)">DENY</span>
<span class="t g" style="left:577.73px;top:183.08px;font-size:16px;line-height:16px;transform:scale(0.9725,0.9167)">1 283 093</span>
<span class="t g" style="left:294.00px;top:217.08px;font-size:16px;line-height:16px;transform:scale(0.8995,0.9167)">all</span>
<span class="t g" style="left:406.50px;top:217.08px;font-size:16px;line-height:16px;transform:scale(0.8925,0.9167)">ALL</span>
<span class="t g" style="left:490.81px;top:217.08px;font-size:16px;line-height:16px;transform:scale(0.8931,0.9167)">DENY</span>
<span class="t g" style="left:587.30px;top:217.08px;font-size:16px;line-height:16px;transform:scale(0.9794,0.9167)">408 300</span>
<span class="t g" style="left:294.00px;top:251.08px;font-size:16px;line-height:16px;transform:scale(0.8995,0.9167)">all</span>
<span class="t g" style="left:406.50px;top:251.08px;font-size:16px;line-height:16px;transform:scale(0.8925,0.9167)">ALL</span>
<span class="t g" style="left:490.81px;top:251.08px;font-size:16px;line-height:16px;transform:scale(0.8931,0.9167)">DENY</span>
<span class="t g" style="left:596.40px;top:251.08px;font-size:16px;line-height:16px;transform:scale(0.9710,0.9167)">49 546</span>
<span class="t g" style="left:294.00px;top:285.08px;font-size:16px;line-height:16px;transform:scale(0.8995,0.9167)">all</span>
<span class="t g" style="left:406.50px;top:285.08px;font-size:16px;line-height:16px;transform:scale(0.8925,0.9167)">ALL</span>
<span class="t g" style="left:490.81px;top:285.08px;font-size:16px;line-height:16px;transform:scale(0.8931,0.9167)">DENY</span>
<span class="t g" style="left:605.50px;top:285.08px;font-size:16px;line-height:16px;transform:scale(0.9586,0.9167)">3 513</span>
<span class="t g" style="left:294.00px;top:319.08px;font-size:16px;line-height:16px;transform:scale(0.8995,0.9167)">all</span>
<span class="t g" style="left:406.50px;top:319.08px;font-size:16px;line-height:16px;transform:scale(0.8925,0.9167)">ALL</span>
<span class="t g" style="left:490.81px;top:319.08px;font-size:16px;line-height:16px;transform:scale(0.8931,0.9167)">DENY</span>
<span class="t g" style="left:596.40px;top:319.08px;font-size:16px;line-height:16px;transform:scale(0.9710,0.9167)">56 926</span>
<span class="t g" style="left:294.00px;top:353.08px;font-size:16px;line-height:16px;transform:scale(0.8995,0.9167)">all</span>
<span class="t g" style="left:406.50px;top:353.08px;font-size:16px;line-height:16px;transform:scale(0.8925,0.9167)">ALL</span>
<span class="t g" style="left:490.81px;top:353.08px;font-size:16px;line-height:16px;transform:scale(0.8931,0.9167)">DENY</span>
<span class="t g" style="left:604.51px;top:353.08px;font-size:16px;line-height:16px;transform:scale(0.9853,0.9167)">1 950</span>
<span class="t g" style="left:294.00px;top:473.08px;font-size:16px;line-height:16px;transform:scale(0.8995,0.9167)">all</span>
<span class="t g" style="left:406.50px;top:473.08px;font-size:16px;line-height:16px;transform:scale(0.8925,0.9167)">ALL</span>
<span class="t g" style="left:490.81px;top:473.08px;font-size:16px;line-height:16px;transform:scale(0.8931,0.9167)">DENY</span>
<span class="t g" style="left:605.50px;top:473.08px;font-size:16px;line-height:16px;transform:scale(0.9586,0.9167)">3 483</span>
<span class="t g" style="left:935.60px;top:81.08px;font-size:16px;line-height:16px;transform:scale(0.8976,0.9167)">always</span>
<span class="t g" style="left:1098.40px;top:81.08px;font-size:16px;line-height:16px;transform:scale(0.9163,0.9167)">42</span>
<div style="position:absolute;left:650px;top:101px;width:512px;height:541px;border:1px solid #333;background:#f9f9f9;box-shadow:inset 0 0 0 1px #fff"></div>
<div style="position:absolute;left:650px;top:642px;width:513px;height:1px;background:rgba(0,0,0,0.27)"></div>
<div style="position:absolute;left:1162px;top:103px;width:1px;height:539px;background:rgba(0,0,0,0.22)"></div>
<div style="position:absolute;left:650px;top:643px;width:513px;height:1px;background:rgba(0,0,0,0.05)"></div>
<svg style="position:absolute;left:0;top:0" width="1166" height="825"><rect x="737" y="436.5" width="388" height="158" fill="#fafafa"/><path d="M728 468.5H1125" stroke="#dedede" stroke-width="1"/><path d="M728 499.5H1125" stroke="#dedede" stroke-width="1"/><path d="M728 531.5H1125" stroke="#dedede" stroke-width="1"/><path d="M728 562.5H1125" stroke="#dedede" stroke-width="1"/><path d="M728 436.5H737" stroke="#aaa" stroke-width="1"/><path d="M728 594.5H737" stroke="#aaa" stroke-width="1"/><path d="M728 468.5H737" stroke="#c8c8c8" stroke-width="1"/><path d="M728 499.5H737" stroke="#c8c8c8" stroke-width="1"/><path d="M728 531.5H737" stroke="#c8c8c8" stroke-width="1"/><path d="M728 562.5H737" stroke="#c8c8c8" stroke-width="1"/><path d="M733 442.5H737" stroke="#d0d0d0" stroke-width="1"/><path d="M733 449.5H737" stroke="#d0d0d0" stroke-width="1"/><path d="M733 455.5H737" stroke="#d0d0d0" stroke-width="1"/><path d="M733 462.5H737" stroke="#d0d0d0" stroke-width="1"/><path d="M733 474.5H737" stroke="#d0d0d0" stroke-width="1"/><path d="M733 480.5H737" stroke="#d0d0d0" stroke-width="1"/><path d="M733 487.5H737" stroke="#d0d0d0" stroke-width="1"/><path d="M733 493.5H737" stroke="#d0d0d0" stroke-width="1"/><path d="M733 505.5H737" stroke="#d0d0d0" stroke-width="1"/><path d="M733 512.5H737" stroke="#d0d0d0" stroke-width="1"/><path d="M733 518.5H737" stroke="#d0d0d0" stroke-width="1"/><path d="M733 525.5H737" stroke="#d0d0d0" stroke-width="1"/><path d="M733 537.5H737" stroke="#d0d0d0" stroke-width="1"/><path d="M733 543.5H737" stroke="#d0d0d0" stroke-width="1"/><path d="M733 550.5H737" stroke="#d0d0d0" stroke-width="1"/><path d="M733 556.5H737" stroke="#d0d0d0" stroke-width="1"/><path d="M733 568.5H737" stroke="#d0d0d0" stroke-width="1"/><path d="M733 575.5H737" stroke="#d0d0d0" stroke-width="1"/><path d="M733 581.5H737" stroke="#d0d0d0" stroke-width="1"/><path d="M733 588.5H737" stroke="#d0d0d0" stroke-width="1"/><path d="M754 594V545H770V594" fill="#a9c6e3" stroke="#3a7cc0" stroke-width="2"/><path d="M803 594V547H819V594" fill="#a9c6e3" stroke="#3a7cc0" stroke-width="2"/><path d="M851 594V527H867V594" fill="#a9c6e3" stroke="#3a7cc0" stroke-width="2"/><path d="M899 594V545H915V594" fill="#a9c6e3" stroke="#3a7cc0" stroke-width="2"/><path d="M948 594V494H964V594" fill="#a9c6e3" stroke="#3a7cc0" stroke-width="2"/><path d="M996 594V511H1012V594" fill="#a9c6e3" stroke="#3a7cc0" stroke-width="2"/><path d="M1045 594V545H1061V594" fill="#a9c6e3" stroke="#3a7cc0" stroke-width="2"/><path d="M1093 594V548H1109V594" fill="#a9c6e3" stroke="#3a7cc0" stroke-width="2"/><path d="M764.5 437V594" stroke="rgba(0,0,0,0.12)" stroke-width="1"/><path d="M764.5 596V604.5" stroke="#cfcfcf" stroke-width="1"/><path d="M813.5 437V594" stroke="rgba(0,0,0,0.12)" stroke-width="1"/><path d="M813.5 596V604.5" stroke="#cfcfcf" stroke-width="1"/><path d="M861.5 437V594" stroke="rgba(0,0,0,0.12)" stroke-width="1"/><path d="M861.5 596V604.5" stroke="#cfcfcf" stroke-width="1"/><path d="M910.5 437V594" stroke="rgba(0,0,0,0.12)" stroke-width="1"/><path d="M910.5 596V604.5" stroke="#cfcfcf" stroke-width="1"/><path d="M958.5 437V594" stroke="rgba(0,0,0,0.12)" stroke-width="1"/><path d="M958.5 596V604.5" stroke="#cfcfcf" stroke-width="1"/><path d="M1007.5 437V594" stroke="rgba(0,0,0,0.12)" stroke-width="1"/><path d="M1007.5 596V604.5" stroke="#cfcfcf" stroke-width="1"/><path d="M1055.5 437V594" stroke="rgba(0,0,0,0.12)" stroke-width="1"/><path d="M1055.5 596V604.5" stroke="#cfcfcf" stroke-width="1"/><path d="M1103.5 437V594" stroke="rgba(0,0,0,0.12)" stroke-width="1"/><path d="M1103.5 596V604.5" stroke="#cfcfcf" stroke-width="1"/><path d="M737.5 436.5H1125.5V594" fill="none" stroke="#777" stroke-width="1"/><path d="M737.5 436.5V594" stroke="#666" stroke-width="1"/><path d="M737 595H1126" stroke="#9a9a9a" stroke-width="2"/></svg>
<span class="t g" style="left:665.17px;top:120.08px;font-size:16px;line-height:16px;transform:scale(0.9295,0.9167);color:#777">Bytes/Packets</span>
<span class="t g" style="left:782.09px;top:120.08px;font-size:16px;line-height:16px;transform:scale(0.9101,0.9167)">10.30 GB</span>
<span class="t g" style="left:858.86px;top:120.08px;font-size:16px;line-height:16px;transform:scale(0.9355,0.9167)">140,040,557</span>
<span class="t g" style="left:681.20px;top:153.08px;font-size:16px;line-height:16px;transform:scale(0.9424,0.9167);color:#777">Software</span>
<span class="t g" style="left:782.09px;top:153.08px;font-size:16px;line-height:16px;transform:scale(0.9101,0.9167)">10.30 GB</span>
<span class="t g" style="left:858.86px;top:153.08px;font-size:16px;line-height:16px;transform:scale(0.9355,0.9167)">140,040,557</span>
<span class="t g" style="left:958.09px;top:153.08px;font-size:16px;line-height:16px;transform:scale(0.9106,0.9167)">100.0%</span>
<span class="t g" style="left:681.20px;top:185.58px;font-size:16px;line-height:16px;transform:scale(0.8348,0.9167);color:#777">SPU</span>
<span class="t g" style="left:781.90px;top:185.58px;font-size:16px;line-height:16px;transform:scale(0.9039,0.9167)">0 B</span>
<span class="t g" style="left:858.70px;top:185.58px;font-size:16px;line-height:16px;transform:scale(0.8778,0.9167)">0</span>
<span class="t g" style="left:958.40px;top:185.58px;font-size:16px;line-height:16px;transform:scale(0.8719,0.9167)">0.0%</span>
<span class="t g" style="left:680.85px;top:218.88px;font-size:16px;line-height:16px;transform:scale(0.9491,0.9167);color:#777">nTurbo</span>
<span class="t g" style="left:781.90px;top:218.88px;font-size:16px;line-height:16px;transform:scale(0.9039,0.9167)">0 B</span>
<span class="t g" style="left:858.70px;top:218.88px;font-size:16px;line-height:16px;transform:scale(0.8778,0.9167)">0</span>
<span class="t g" style="left:958.40px;top:218.88px;font-size:16px;line-height:16px;transform:scale(0.8719,0.9167)">0.0%</span>
<span class="t g" style="left:665.54px;top:252.08px;font-size:16px;line-height:16px;transform:scale(0.9570,0.9167);color:#777">Hit Count</span>
<span class="t g" style="left:781.35px;top:252.08px;font-size:16px;line-height:16px;transform:scale(0.9492,0.9167)">140,047,947</span>
<span class="t g" style="left:665.57px;top:285.08px;font-size:16px;line-height:16px;transform:scale(0.9268,0.9167);color:#777">First Used</span>
<span class="t g" style="left:782.00px;top:285.08px;font-size:16px;line-height:16px;transform:scale(0.9714,0.9167)">2025/04/25 18:03:17</span>
<span class="t g" style="left:666.50px;top:317.68px;font-size:16px;line-height:16px;transform:scale(0.8828,0.9167);color:#777">Active Sessions</span>
<span class="t g" style="left:782.00px;top:317.68px;font-size:16px;line-height:16px;transform:scale(0.8889,0.9167)">0</span>
<span class="t g" style="left:665.60px;top:350.58px;font-size:16px;line-height:16px;transform:scale(0.8968,0.9167);color:#777">Last Used</span>
<span class="t g" style="left:782.00px;top:350.58px;font-size:16px;line-height:16px;transform:scale(0.9714,0.9167)">2026/04/05 20:46:32</span>
<span class="t g" style="left:665.63px;top:391.38px;font-size:16px;line-height:16px;transform:scale(0.8689,0.9167);font-weight:700">Last 7 Days Hit Count</span>
<span class="t g" style="left:666.62px;top:429.20px;font-size:14px;line-height:14px;transform:scale(0.9758,1.0)">1 000 000</span>
<span class="t g" style="left:675.80px;top:460.40px;font-size:14px;line-height:14px;transform:scale(0.9667,1.0)">800 000</span>
<span class="t g" style="left:675.80px;top:491.90px;font-size:14px;line-height:14px;transform:scale(0.9667,1.0)">600 000</span>
<span class="t g" style="left:675.80px;top:523.10px;font-size:14px;line-height:14px;transform:scale(0.9667,1.0)">400 000</span>
<span class="t g" style="left:675.80px;top:554.50px;font-size:14px;line-height:14px;transform:scale(0.9667,1.0)">200 000</span>
<span class="t g" style="left:714.70px;top:585.90px;font-size:14px;line-height:14px;transform:scale(0.9500,1.0)">0</span>
<span class="t g" style="left:743.07px;top:609.00px;font-size:14px;line-height:14px;transform:scale(0.9349,1.0)">Mar 29</span>
<span class="t g" style="left:791.36px;top:609.00px;font-size:14px;line-height:14px;transform:scale(0.9396,1.0)">Mar 30</span>
<span class="t g" style="left:839.26px;top:609.00px;font-size:14px;line-height:14px;transform:scale(0.9419,1.0)">Mar 31</span>
<span class="t g" style="left:889.50px;top:609.00px;font-size:14px;line-height:14px;transform:scale(0.9189,1.0)">Apr 01</span>
<span class="t g" style="left:937.80px;top:609.00px;font-size:14px;line-height:14px;transform:scale(0.9213,1.0)">Apr 02</span>
<span class="t g" style="left:986.20px;top:609.00px;font-size:14px;line-height:14px;transform:scale(0.9213,1.0)">Apr 03</span>
<span class="t g" style="left:1034.60px;top:609.00px;font-size:14px;line-height:14px;transform:scale(0.9213,1.0)">Apr 04</span>
<span class="t g" style="left:1082.90px;top:609.00px;font-size:14px;line-height:14px;transform:scale(0.9213,1.0)">Apr 05</span>
</body></html>
